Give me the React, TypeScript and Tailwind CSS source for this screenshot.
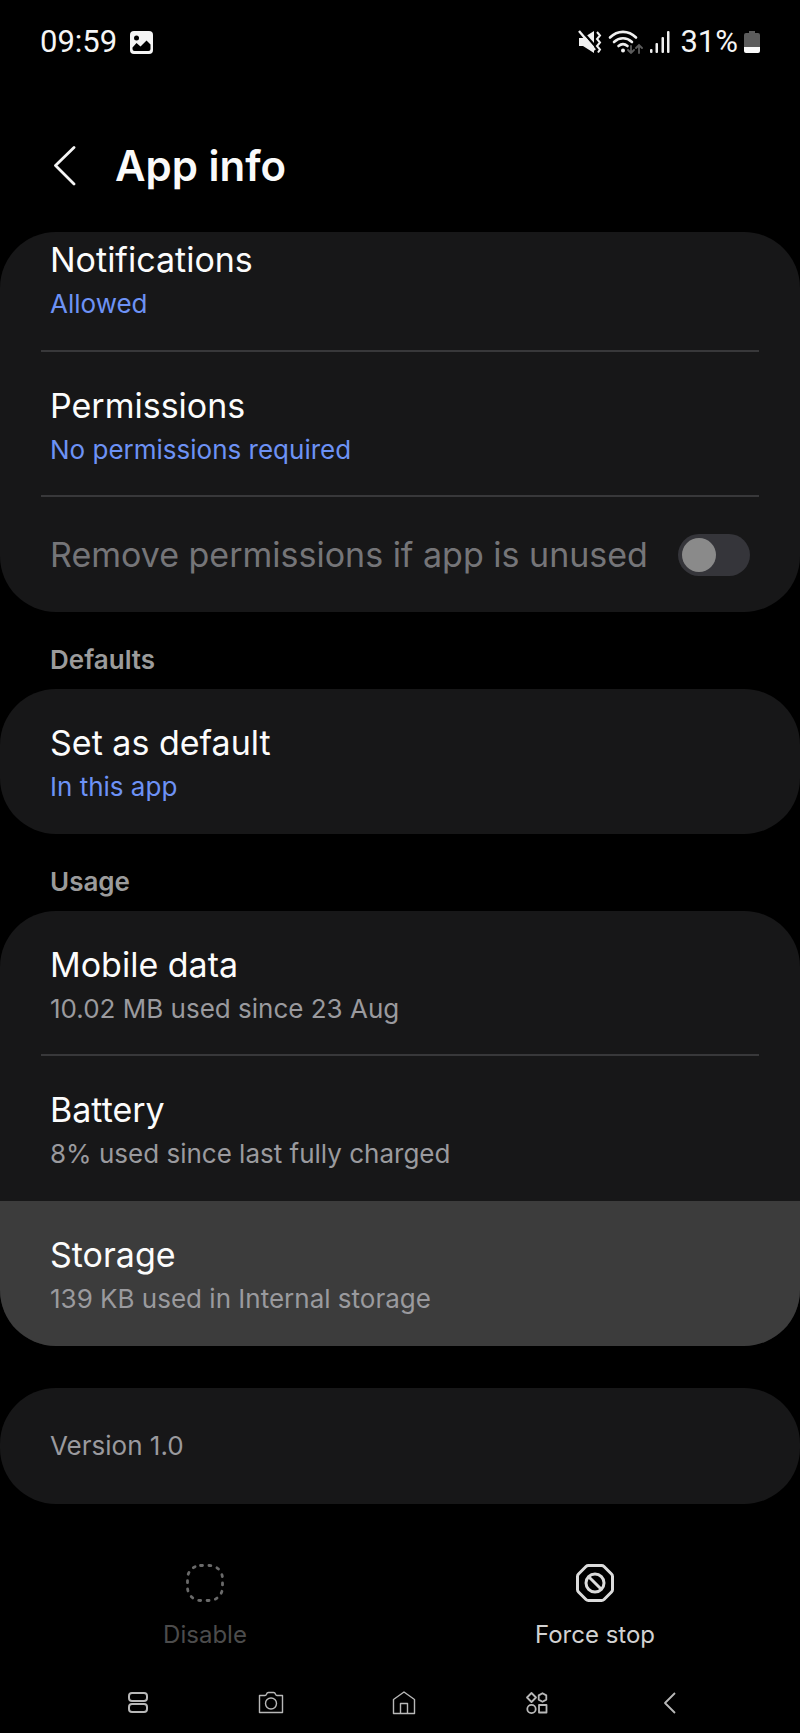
import type { ReactNode } from 'react'

type RowProps = {
  title: string
  detail: string
  accent?: boolean
  divider?: boolean
  pressed?: boolean
  clipped?: boolean
}

function Divider() {
  return <div className="mx-[41px] h-0.5 bg-[#38383a]" />
}

function Row({ title, detail, accent, divider, pressed, clipped }: RowProps) {
  return (
    <>
      <button
        type="button"
        className={`block w-full px-[50px] text-left ${
          clipped ? 'pt-1 pb-[26px]' : divider ? 'pt-[30px] pb-[25px]' : 'pt-[30px] pb-[27px]'
        } ${pressed ? 'bg-[#3c3c3c]' : ''}`}
      >
        <span className="block text-[34px] leading-12 text-[#fcfcfc]">{title}</span>
        <span className={`block text-[26px] leading-10 ${accent ? 'text-[#6d92f5]' : 'text-[#9a9a9e]'}`}>
          {detail}
        </span>
      </button>
      {divider && <Divider />}
    </>
  )
}

function Card({ children }: { children: ReactNode }) {
  return <section className="overflow-hidden rounded-[56px] bg-[#171718]">{children}</section>
}

function SectionTitle({ children }: { children: ReactNode }) {
  return <h2 className="px-[50px] pt-7 pb-[9px] text-[26px] leading-10 font-semibold text-[#9b9b9b]">{children}</h2>
}

function StatusBar() {
  return (
    <div className="flex h-21 items-center justify-between px-10 font-[Roboto,sans-serif] text-[31px] text-[#f5f5f5]">
      <div className="flex items-center gap-3">
        <time>09:59</time>
        <svg className="size-6" viewBox="0 0 24 24">
          <rect x="1" y="1" width="23" height="23" rx="4" fill="#f5f5f5" />
          <circle cx="7.5" cy="8" r="2.5" fill="#000" />
          <path d="M3.5 17.5 7.5 13l4 3.5 6-6 4 4V19a2 2 0 0 1-2 2h-14a2 2 0 0 1-2-2z" fill="#000" />
        </svg>
      </div>

      <div className="flex items-center gap-1.5">
        {/* Muted, vibrate on */}
        <svg className="h-6 w-6" viewBox="0 0 24 24" fill="none">
          <path d="M1 8h4l11-7v22L5 16H1z" fill="#f0f0f0" />
          <path d="M2 -1 18 17" stroke="#000" strokeWidth="2.400" />
          <path d="M1 1 17 20" stroke="#f0f0f0" strokeWidth="2.400" />
          <path d="m19 2 3 3.5-3 3.5 3 3.5-3 3.5 3 3.5-2 3" stroke="#f0f0f0" strokeWidth="2" />
        </svg>
        <svg className="h-6 w-9" viewBox="0 0 36 24" fill="none" strokeLinecap="round">
          <path d="M2 7.5C9.500 0 20.500 0 28 7.500" stroke="#f0f0f0" strokeWidth="2.600" />
          <path d="M6 12c5.500-5 12.500-5 18 0" stroke="#f0f0f0" strokeWidth="2.600" />
          <path d="M10.500 16c3-2.500 6-2.500 9 0" stroke="#f0f0f0" strokeWidth="2.600" />
          <circle cx="15" cy="20.500" r="2" fill="#f0f0f0" />
          <path d="M23 16v7m-3-3 3 3 3-3M31 23v-8m-3 3 3-3 3 3" stroke="#5c5c5c" strokeWidth="1.800" />
        </svg>
        <svg className="h-6 w-5" viewBox="0 0 20 24" fill="#f0f0f0">
          <rect x="0" y="19" width="2.500" height="4" rx="1" />
          <rect x="5.500" y="13" width="2.500" height="10" rx="1" />
          <rect x="11.500" y="7" width="2.500" height="16" rx="1" />
          <rect x="17" y="1" width="2.500" height="22" rx="1" />
        </svg>
        <div className="flex items-center gap-1.5 pl-1">
          <span>31%</span>
          <svg className="h-6 w-4" viewBox="0 0 16 24">
            <path d="M5 1h6v2h3a2 2 0 0 1 2 2v12H0V5a2 2 0 0 1 2-2h3z" fill="#5c5c5c" />
            <path d="M0 17h16v4a2 2 0 0 1-2 2H2a2 2 0 0 1-2-2z" fill="#fafafa" />
          </svg>
        </div>
      </div>
    </div>
  )
}

function BottomActions() {
  return (
    <div className="grid grid-cols-2 px-2.5 pt-[59px] text-[24px] leading-8">
      <button type="button" disabled className="flex flex-col items-center gap-4 text-[#4c4c4c]">
        <svg className="size-10" viewBox="0 0 40 40" fill="none">
          <rect
            x="2.500"
            y="2.500"
            width="35"
            height="35"
            rx="13"
            stroke="#6a6a6a"
            strokeWidth="2.800"
            strokeLinecap="round"
            strokeDasharray="2 6.430"
          />
        </svg>
        Disable
      </button>
      <button type="button" className="flex flex-col items-center gap-4 text-[#d2d2d2]">
        <svg className="size-10" viewBox="0 0 40 40" fill="none" stroke="#dcdcdc" strokeWidth="3">
          <path d="M13.500 2.500h13q1.500 0 2.500 1l7.500 7.500q1 1 1 2.500v13q0 1.500-1 2.500L29 36.500q-1 1-2.500 1h-13q-1.500 0-2.500-1L3.500 29q-1-1-1-2.500v-13q0-1.500 1-2.500L11 3.500q1-1 2.500-1z" />
          <circle cx="20" cy="20" r="9" />
          <path d="m13.700 13.700 12.600 12.600" />
        </svg>
        Force stop
      </button>
    </div>
  )
}

const navItems = [
  {
    label: 'Recents',
    icon: (
      <g strokeWidth="2">
        <rect x="5" y="4" width="18" height="8" rx="3" />
        <rect x="5" y="15" width="18" height="8" rx="3" />
      </g>
    ),
  },
  {
    label: 'Camera',
    icon: (
      <g strokeWidth="1.400">
        <path d="M2.500 6.500h5.500q1 0 1.500-1.200.5-1.800 2-1.800h5q1.500 0 2 1.800.5 1.200 1.500 1.200h5.500v17h-23z" />
        <circle cx="14" cy="14.500" r="5.500" />
      </g>
    ),
  },
  {
    label: 'Home',
    icon: <path d="M3.500 24.500v-14L14 3l10.500 7.500v14zM10.500 24.500v-10h7v10" strokeWidth="1.400" />,
  },
  {
    label: 'Apps',
    icon: (
      <g strokeWidth="1.800">
        <path d="m8.500 4 4.500 4.500-4.500 4.500L4 8.500z" />
        <path d="m19.500 4.200 3.800 2.200v4.200l-3.800 2.200-3.800-2.200V6.400z" />
        <circle cx="8.500" cy="20" r="4.200" />
        <rect x="16" y="16" width="7.500" height="7.500" />
      </g>
    ),
  },
  {
    label: 'Back',
    icon: <path d="M19 4 9 14l10 10" strokeWidth="1.800" />,
  },
]

function NavBar() {
  return (
    <nav className="grid grid-cols-5 pt-[38px] pr-16 pb-4 pl-18">
      {navItems.map((item) => (
        <button key={item.label} type="button" aria-label={item.label} className="flex justify-center">
          <svg className="size-7" viewBox="0 0 28 28" fill="none" stroke="#b8b8b8" strokeLinejoin="round">
            {item.icon}
          </svg>
        </button>
      ))}
    </nav>
  )
}

export default function App() {
  return (
    <div className="min-h-screen overflow-x-hidden bg-black font-[Inter,sans-serif]">
      <StatusBar />

      <header className="flex items-center gap-8 px-[43px] pt-14 pb-10">
        <button type="button" aria-label="Navigate up">
          <svg className="h-10 w-10" viewBox="0 0 40 40" fill="none" stroke="#f5f5f5" strokeWidth="2.800">
            <path d="M31 1.500 12.500 19.500 31 38" strokeLinecap="round" strokeLinejoin="round" />
          </svg>
        </button>
        <h1 className="text-[42px] leading-13 font-semibold text-[#fafafa]">App info</h1>
      </header>

      <main>
        <Card>
          <Row title="Notifications" detail="Allowed" accent divider clipped />
          <Row title="Permissions" detail="No permissions required" accent divider />
          <label className="flex h-[115px] items-center justify-between px-[50px]">
            <span className="text-[34px] leading-12 text-[#757578]">Remove permissions if app is unused</span>
            <span className="relative flex shrink-0">
              <input
                type="checkbox"
                role="switch"
                disabled
                className="h-[42px] w-18 appearance-none rounded-full bg-[#35353a]"
              />
              <span className="absolute top-1 left-1 size-[34px] rounded-full bg-[#8a8a8a]" />
            </span>
          </label>
        </Card>

        <SectionTitle>Defaults</SectionTitle>
        <Card>
          <Row title="Set as default" detail="In this app" accent />
        </Card>

        <SectionTitle>Usage</SectionTitle>
        <Card>
          <Row title="Mobile data" detail="10.02 MB used since 23 Aug" divider />
          <Row title="Battery" detail="8% used since last fully charged" />
          <Row title="Storage" detail="139 KB used in Internal storage" pressed />
        </Card>

        <div className="pt-[42px]">
          <Card>
            <p className="px-[50px] py-[38px] text-[26px] leading-10 text-[#9a9a9e]">Version 1.0</p>
          </Card>
        </div>
      </main>

      <BottomActions />
      <NavBar />
    </div>
  )
}
